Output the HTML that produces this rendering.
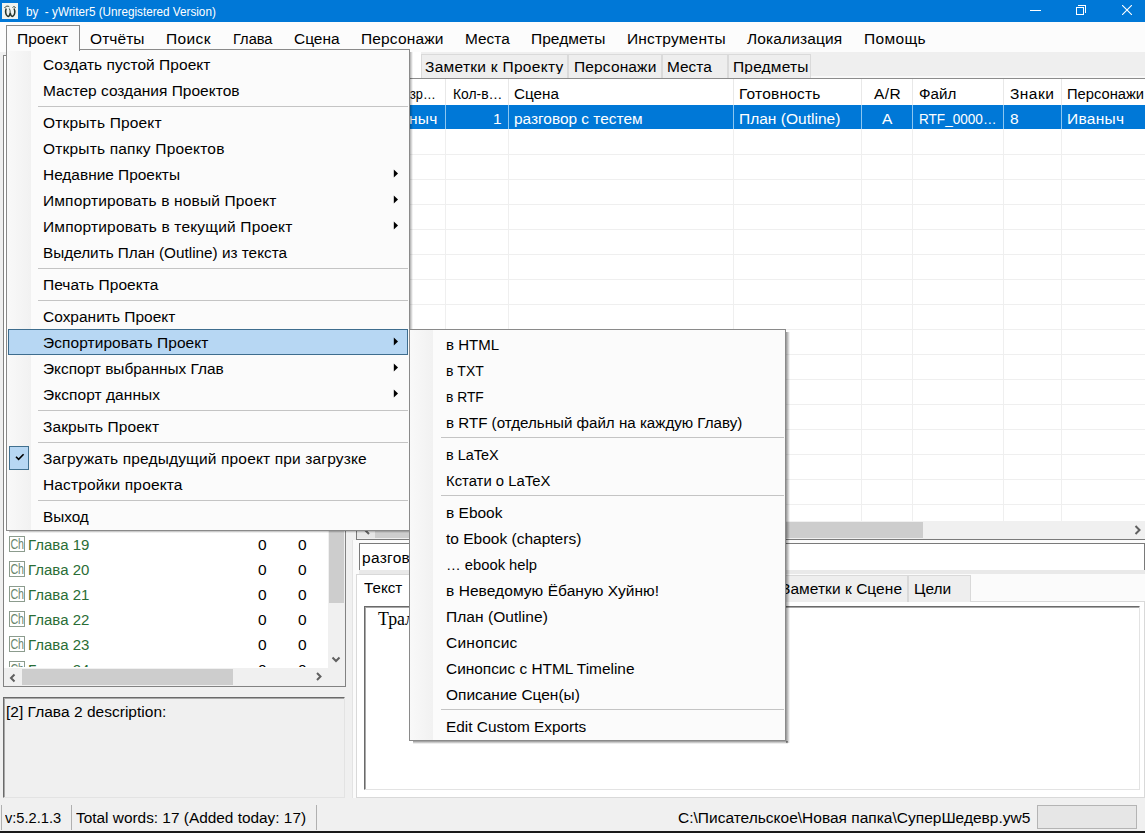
<!DOCTYPE html><html><head><meta charset="utf-8"><style>
*{margin:0;padding:0;box-sizing:border-box}
html,body{width:1145px;height:833px;overflow:hidden;background:#f0f0f0;font-family:"Liberation Sans",sans-serif;font-size:15px;color:#000;position:relative}
.abs{position:absolute}
.t{position:absolute;white-space:nowrap;letter-spacing:0.3px}
</style></head><body>

<div class="abs" style="left:0px;top:0px;width:1145px;height:22px;background:#0078d7"></div>
<div class="abs" style="left:2px;top:3px;width:16px;height:16px;background:#eef3f0"></div>
<svg class="abs" style="left:2px;top:3px" width="16" height="16"><path d="M4.2 5.5C3.2 8 3.5 12 5.5 13.2C7 14 8 12 8.2 9.5C8.5 12 9.5 14 11 13.2C13 12 13.3 8 12 5.5" stroke="#26352b" stroke-width="1.5" fill="none"/><path d="M8.2 9.5C8.2 8 8 6.5 7.3 5.5M2.5 5C3.5 3 6 2.5 7.3 3.8M10.5 4.5C11.5 3.2 13.2 3.5 13.5 5" stroke="#26352b" stroke-width="0.9" fill="none"/></svg>
<div class="t" style="left:26px;top:3.63px;font-size:12.3px;line-height:16px;letter-spacing:0px;transform:scaleX(0.9522);transform-origin:0 0;color:#fff">by&nbsp; - yWriter5 (Unregistered Version)</div>
<div class="abs" style="left:1030px;top:10px;width:11px;height:1px;background:#fff"></div>
<div class="abs" style="left:1076px;top:7px;width:8px;height:8px;border:1px solid #fff"></div>
<div class="abs" style="left:1078px;top:5px;width:8px;height:8px;border-top:1px solid #fff;border-right:1px solid #fff"></div>
<svg class="abs" style="left:1122px;top:5px" width="10" height="10"><path d="M0 0L10 10M10 0L0 10" stroke="#fff" stroke-width="1.1"/></svg>
<div class="abs" style="left:0px;top:22px;width:1145px;height:30px;background:#fcfcfc"></div>
<div class="t" style="left:90px;top:28.68px;font-size:15.5px;line-height:20px;letter-spacing:0.081px;">Отчёты</div>
<div class="t" style="left:166px;top:28.68px;font-size:15.5px;line-height:20px;letter-spacing:0.387px;">Поиск</div>
<div class="t" style="left:233px;top:28.68px;font-size:15.5px;line-height:20px;letter-spacing:0px;transform:scaleX(0.9433);transform-origin:0 0;">Глава</div>
<div class="t" style="left:294px;top:28.68px;font-size:15.5px;line-height:20px;letter-spacing:0px;transform:scaleX(0.9977);transform-origin:0 0;">Сцена</div>
<div class="t" style="left:361px;top:28.68px;font-size:15.5px;line-height:20px;letter-spacing:0.157px;">Персонажи</div>
<div class="t" style="left:465px;top:28.68px;font-size:15.5px;line-height:20px;letter-spacing:0px;transform:scaleX(0.9930);transform-origin:0 0;">Места</div>
<div class="t" style="left:531px;top:28.68px;font-size:15.5px;line-height:20px;letter-spacing:0.029px;">Предметы</div>
<div class="t" style="left:627px;top:28.68px;font-size:15.5px;line-height:20px;letter-spacing:0.194px;">Инструменты</div>
<div class="t" style="left:747px;top:28.68px;font-size:15.5px;line-height:20px;letter-spacing:0.129px;">Локализация</div>
<div class="t" style="left:864px;top:28.68px;font-size:15.5px;line-height:20px;letter-spacing:0.345px;">Помощь</div>
<div class="abs" style="left:345px;top:52px;width:800px;height:27px;background:#efefef"></div>
<div class="abs" style="left:811px;top:76px;width:334px;height:2px;background:#f9f9f9"></div>
<div class="abs" style="left:356px;top:52px;width:65px;height:27px;background:#fff"></div>
<div class="abs" style="left:421px;top:54px;width:147px;height:25px;background:#eeeeee;border:1px solid #dadada;border-bottom:none"></div>
<div class="t" style="left:425px;top:57.38px;font-size:15.5px;line-height:20px;letter-spacing:0.283px;">Заметки к Проекту</div>
<div class="abs" style="left:422px;top:74px;width:145px;height:4px;background:#eeeeee"></div>
<div class="abs" style="left:568px;top:54px;width:94px;height:25px;background:#eeeeee;border:1px solid #dadada;border-bottom:none"></div>
<div class="t" style="left:574px;top:57.38px;font-size:15.5px;line-height:20px;letter-spacing:0.145px;">Персонажи</div>
<div class="abs" style="left:569px;top:74px;width:92px;height:4px;background:#eeeeee"></div>
<div class="abs" style="left:662px;top:54px;width:66px;height:25px;background:#eeeeee;border:1px solid #dadada;border-bottom:none"></div>
<div class="t" style="left:667px;top:57.38px;font-size:15.5px;line-height:20px;letter-spacing:0px;transform:scaleX(0.9952);transform-origin:0 0;">Места</div>
<div class="abs" style="left:663px;top:74px;width:64px;height:4px;background:#eeeeee"></div>
<div class="abs" style="left:728px;top:54px;width:83px;height:25px;background:#eeeeee;border:1px solid #dadada;border-bottom:none"></div>
<div class="t" style="left:733px;top:57.38px;font-size:15.5px;line-height:20px;letter-spacing:0.187px;">Предметы</div>
<div class="abs" style="left:729px;top:74px;width:81px;height:4px;background:#eeeeee"></div>
<div class="abs" style="left:356px;top:78px;width:789px;height:1px;background:#8c8c8c"></div>
<div class="abs" style="left:356px;top:79px;width:789px;height:460px;background:#fff"></div>
<div class="t" style="left:410px;top:83.68px;font-size:15.5px;line-height:20px;letter-spacing:0px;transform:scaleX(0.8228);transform-origin:0 0;">зр…</div>
<div class="t" style="left:453px;top:83.68px;font-size:15.5px;line-height:20px;letter-spacing:0px;transform:scaleX(0.8959);transform-origin:0 0;">Кол-в…</div>
<div class="t" style="left:514px;top:83.68px;font-size:15.5px;line-height:20px;letter-spacing:0px;transform:scaleX(0.9824);transform-origin:0 0;">Сцена</div>
<div class="t" style="left:739px;top:83.68px;font-size:15.5px;line-height:20px;letter-spacing:0.197px;">Готовность</div>
<div class="t" style="left:874px;top:83.68px;font-size:15.5px;line-height:20px;letter-spacing:0.428px;">A/R</div>
<div class="t" style="left:919px;top:83.68px;font-size:15.5px;line-height:20px;letter-spacing:0px;transform:scaleX(0.9788);transform-origin:0 0;">Файл</div>
<div class="t" style="left:1010px;top:83.68px;font-size:15.5px;line-height:20px;letter-spacing:0.454px;">Знаки</div>
<div class="t" style="left:1067px;top:83.68px;font-size:15.5px;line-height:20px;letter-spacing:0px;transform:scaleX(0.9490);transform-origin:0 0;">Персонажи</div>
<div class="abs" style="left:356px;top:105px;width:789px;height:24px;background:#0078d7"></div>
<div class="t" style="left:409px;top:108.98px;font-size:15.5px;line-height:20px;color:#fff">ныч</div>
<div class="t" style="left:493px;top:108.98px;font-size:15.5px;line-height:20px;color:#fff">1</div>
<div class="t" style="left:514px;top:108.98px;font-size:15.5px;line-height:20px;letter-spacing:0px;transform:scaleX(0.9947);transform-origin:0 0;color:#fff">разговор с тестем</div>
<div class="t" style="left:739px;top:108.98px;font-size:15.5px;line-height:20px;letter-spacing:0.022px;color:#fff">План (Outline)</div>
<div class="t" style="left:882px;top:108.98px;font-size:15.5px;line-height:20px;color:#fff">A</div>
<div class="t" style="left:919px;top:108.98px;font-size:15.5px;line-height:20px;letter-spacing:0px;transform:scaleX(0.8762);transform-origin:0 0;color:#fff">RTF_0000…</div>
<div class="t" style="left:1010px;top:108.98px;font-size:15.5px;line-height:20px;color:#fff">8</div>
<div class="t" style="left:1067px;top:108.98px;font-size:15.5px;line-height:20px;letter-spacing:0.278px;color:#fff">Иваныч</div>
<div class="abs" style="left:445px;top:79px;width:1px;height:26px;background:#e8e8e8"></div>
<div class="abs" style="left:445px;top:105px;width:1px;height:24px;background:#8cc6f0"></div>
<div class="abs" style="left:445px;top:129px;width:1px;height:392px;background:#efefef"></div>
<div class="abs" style="left:508px;top:79px;width:1px;height:26px;background:#e8e8e8"></div>
<div class="abs" style="left:508px;top:105px;width:1px;height:24px;background:#8cc6f0"></div>
<div class="abs" style="left:508px;top:129px;width:1px;height:392px;background:#efefef"></div>
<div class="abs" style="left:733px;top:79px;width:1px;height:26px;background:#e8e8e8"></div>
<div class="abs" style="left:733px;top:105px;width:1px;height:24px;background:#8cc6f0"></div>
<div class="abs" style="left:733px;top:129px;width:1px;height:392px;background:#efefef"></div>
<div class="abs" style="left:861px;top:79px;width:1px;height:26px;background:#e8e8e8"></div>
<div class="abs" style="left:861px;top:105px;width:1px;height:24px;background:#8cc6f0"></div>
<div class="abs" style="left:861px;top:129px;width:1px;height:392px;background:#efefef"></div>
<div class="abs" style="left:912px;top:79px;width:1px;height:26px;background:#e8e8e8"></div>
<div class="abs" style="left:912px;top:105px;width:1px;height:24px;background:#8cc6f0"></div>
<div class="abs" style="left:912px;top:129px;width:1px;height:392px;background:#efefef"></div>
<div class="abs" style="left:1003px;top:79px;width:1px;height:26px;background:#e8e8e8"></div>
<div class="abs" style="left:1003px;top:105px;width:1px;height:24px;background:#8cc6f0"></div>
<div class="abs" style="left:1003px;top:129px;width:1px;height:392px;background:#efefef"></div>
<div class="abs" style="left:1061px;top:79px;width:1px;height:26px;background:#e8e8e8"></div>
<div class="abs" style="left:1061px;top:105px;width:1px;height:24px;background:#8cc6f0"></div>
<div class="abs" style="left:1061px;top:129px;width:1px;height:392px;background:#efefef"></div>
<div class="abs" style="left:356px;top:154px;width:789px;height:1px;background:#efefef"></div>
<div class="abs" style="left:356px;top:179px;width:789px;height:1px;background:#efefef"></div>
<div class="abs" style="left:356px;top:204px;width:789px;height:1px;background:#efefef"></div>
<div class="abs" style="left:356px;top:229px;width:789px;height:1px;background:#efefef"></div>
<div class="abs" style="left:356px;top:254px;width:789px;height:1px;background:#efefef"></div>
<div class="abs" style="left:356px;top:279px;width:789px;height:1px;background:#efefef"></div>
<div class="abs" style="left:356px;top:304px;width:789px;height:1px;background:#efefef"></div>
<div class="abs" style="left:356px;top:329px;width:789px;height:1px;background:#efefef"></div>
<div class="abs" style="left:356px;top:354px;width:789px;height:1px;background:#efefef"></div>
<div class="abs" style="left:356px;top:379px;width:789px;height:1px;background:#efefef"></div>
<div class="abs" style="left:356px;top:404px;width:789px;height:1px;background:#efefef"></div>
<div class="abs" style="left:356px;top:429px;width:789px;height:1px;background:#efefef"></div>
<div class="abs" style="left:356px;top:454px;width:789px;height:1px;background:#efefef"></div>
<div class="abs" style="left:356px;top:479px;width:789px;height:1px;background:#efefef"></div>
<div class="abs" style="left:356px;top:504px;width:789px;height:1px;background:#efefef"></div>
<div class="abs" style="left:356px;top:521px;width:789px;height:18px;background:#f0f0f0"></div>
<div class="abs" style="left:375px;top:522px;width:548px;height:16px;background:#cdcdcd"></div>
<div class="abs" style="left:357px;top:522px;width:18px;height:16px;background:#e6e6e6"></div>
<svg class="abs" style="left:362px;top:524px" width="10" height="12"><path d="M7 2L3 6L7 10" stroke="#606060" stroke-width="2" fill="none"/></svg>
<svg class="abs" style="left:1133px;top:524px" width="10" height="12"><path d="M2.5 2L6.5 6L2.5 10" stroke="#606060" stroke-width="2" fill="none"/></svg>
<div class="abs" style="left:356px;top:539px;width:789px;height:1px;background:#7a7a7a"></div>
<div class="abs" style="left:356px;top:79px;width:1px;height:461px;background:#7a7a7a"></div>
<div class="abs" style="left:352px;top:540px;width:793px;height:258px;background:#fbfbfb;border-left:1px solid #e3e3e3"></div>
<div class="abs" style="left:356px;top:601px;width:789px;height:197px;background:#fff;border:1px solid #d9d9d9"></div>
<div class="abs" style="left:359px;top:543px;width:786px;height:27px;background:#fff;border:1px solid #7a7a7a;border-bottom:none"></div>
<div class="abs" style="left:359px;top:570px;width:786px;height:4px;background:#e9e9e9"></div>
<div class="t" style="left:362px;top:548.08px;font-size:15.5px;line-height:20px;">разговор с тестем</div>
<div class="abs" style="left:420px;top:575px;width:350px;height:27px;background:#eeeeee;border:1px solid #d9d9d9;border-bottom:none"></div>
<div class="abs" style="left:770px;top:575px;width:138px;height:27px;background:#eeeeee;border:1px solid #d9d9d9;border-bottom:none"></div>
<div class="abs" style="left:908px;top:575px;width:63px;height:27px;background:#eeeeee;border:1px solid #d9d9d9;border-bottom:none"></div>
<div class="abs" style="left:356px;top:574px;width:64px;height:33px;background:#fff;border:1px solid #d9d9d9;border-bottom:none"></div>
<div class="t" style="left:364px;top:578.08px;font-size:15.5px;line-height:20px;letter-spacing:0px;transform:scaleX(0.9813);transform-origin:0 0;">Текст</div>
<div class="t" style="left:781px;top:579.28px;font-size:15.5px;line-height:20px;letter-spacing:0.045px;">Заметки к Сцене</div>
<div class="t" style="left:914px;top:579.28px;font-size:15.5px;line-height:20px;letter-spacing:0px;transform:scaleX(0.9978);transform-origin:0 0;">Цели</div>
<div class="abs" style="left:364px;top:606px;width:776px;height:184px;background:#fff;border:1px solid #e3e3e3;border-top-color:#6a6a6a;border-left-color:#6a6a6a;box-shadow:inset 1px 1px 0 #a8a8a8"></div>
<div class="t" style="left:378px;top:609.12px;font-size:17.8px;line-height:20px;letter-spacing:0.000px;font-family:'Liberation Serif';color:#000">Трали-вали</div>
<div class="abs" style="left:3px;top:55px;width:343px;height:632px;background:#fff;border:1px solid #828282"></div>
<div class="abs" style="left:4px;top:530px;width:324px;height:137px;overflow:hidden">
<div class="abs" style="left:5px;top:6px;width:16px;height:16px;border:1px solid #8c9c8e;background:#fff"></div>
<div class="t" style="left:4px;top:7px;width:18px;height:14px;font-size:14.5px;line-height:14px;color:#6a866e;letter-spacing:-0.6px;text-align:center;transform:scaleX(0.74)">Ch</div>
<div class="t" style="left:24px;top:5.28px;font-size:15.5px;line-height:20px;letter-spacing:0px;transform:scaleX(0.9665);transform-origin:0 0;color:#2a6d36">Глава 19</div>
<div class="t" style="left:254px;top:5.28px;font-size:15.5px;line-height:20px;letter-spacing:0.000px;">0</div>
<div class="t" style="left:294px;top:5.28px;font-size:15.5px;line-height:20px;letter-spacing:0.000px;">0</div>
<div class="abs" style="left:5px;top:31px;width:16px;height:16px;border:1px solid #8c9c8e;background:#fff"></div>
<div class="t" style="left:4px;top:32px;width:18px;height:14px;font-size:14.5px;line-height:14px;color:#6a866e;letter-spacing:-0.6px;text-align:center;transform:scaleX(0.74)">Ch</div>
<div class="t" style="left:24px;top:30.28px;font-size:15.5px;line-height:20px;letter-spacing:0px;transform:scaleX(0.9665);transform-origin:0 0;color:#2a6d36">Глава 20</div>
<div class="t" style="left:254px;top:30.28px;font-size:15.5px;line-height:20px;letter-spacing:0.000px;">0</div>
<div class="t" style="left:294px;top:30.28px;font-size:15.5px;line-height:20px;letter-spacing:0.000px;">0</div>
<div class="abs" style="left:5px;top:56px;width:16px;height:16px;border:1px solid #8c9c8e;background:#fff"></div>
<div class="t" style="left:4px;top:57px;width:18px;height:14px;font-size:14.5px;line-height:14px;color:#6a866e;letter-spacing:-0.6px;text-align:center;transform:scaleX(0.74)">Ch</div>
<div class="t" style="left:24px;top:55.28px;font-size:15.5px;line-height:20px;letter-spacing:0px;transform:scaleX(0.9665);transform-origin:0 0;color:#2a6d36">Глава 21</div>
<div class="t" style="left:254px;top:55.28px;font-size:15.5px;line-height:20px;letter-spacing:0.000px;">0</div>
<div class="t" style="left:294px;top:55.28px;font-size:15.5px;line-height:20px;letter-spacing:0.000px;">0</div>
<div class="abs" style="left:5px;top:81px;width:16px;height:16px;border:1px solid #8c9c8e;background:#fff"></div>
<div class="t" style="left:4px;top:82px;width:18px;height:14px;font-size:14.5px;line-height:14px;color:#6a866e;letter-spacing:-0.6px;text-align:center;transform:scaleX(0.74)">Ch</div>
<div class="t" style="left:24px;top:80.28px;font-size:15.5px;line-height:20px;letter-spacing:0px;transform:scaleX(0.9665);transform-origin:0 0;color:#2a6d36">Глава 22</div>
<div class="t" style="left:254px;top:80.28px;font-size:15.5px;line-height:20px;letter-spacing:0.000px;">0</div>
<div class="t" style="left:294px;top:80.28px;font-size:15.5px;line-height:20px;letter-spacing:0.000px;">0</div>
<div class="abs" style="left:5px;top:106px;width:16px;height:16px;border:1px solid #8c9c8e;background:#fff"></div>
<div class="t" style="left:4px;top:107px;width:18px;height:14px;font-size:14.5px;line-height:14px;color:#6a866e;letter-spacing:-0.6px;text-align:center;transform:scaleX(0.74)">Ch</div>
<div class="t" style="left:24px;top:105.28px;font-size:15.5px;line-height:20px;letter-spacing:0px;transform:scaleX(0.9665);transform-origin:0 0;color:#2a6d36">Глава 23</div>
<div class="t" style="left:254px;top:105.28px;font-size:15.5px;line-height:20px;letter-spacing:0.000px;">0</div>
<div class="t" style="left:294px;top:105.28px;font-size:15.5px;line-height:20px;letter-spacing:0.000px;">0</div>
<div class="abs" style="left:5px;top:131px;width:16px;height:16px;border:1px solid #8c9c8e;background:#fff"></div>
<div class="t" style="left:4px;top:132px;width:18px;height:14px;font-size:14.5px;line-height:14px;color:#6a866e;letter-spacing:-0.6px;text-align:center;transform:scaleX(0.74)">Ch</div>
<div class="t" style="left:24px;top:130.28px;font-size:15.5px;line-height:20px;letter-spacing:0px;transform:scaleX(0.9665);transform-origin:0 0;color:#2a6d36">Глава 24</div>
<div class="t" style="left:254px;top:130.28px;font-size:15.5px;line-height:20px;letter-spacing:0.000px;">0</div>
<div class="t" style="left:294px;top:130.28px;font-size:15.5px;line-height:20px;letter-spacing:0.000px;">0</div>
</div>
<div class="abs" style="left:4px;top:668px;width:341px;height:18px;background:#f0f0f0"></div>
<div class="abs" style="left:22px;top:669px;width:211px;height:16px;background:#cdcdcd"></div>
<svg class="abs" style="left:8px;top:672px" width="10" height="12"><path d="M6.5 2.5L3 6L6.5 9.5" stroke="#606060" stroke-width="2" fill="none"/></svg>
<svg class="abs" style="left:314px;top:670px" width="10" height="12"><path d="M3 3L6.5 6.5L3 10" stroke="#606060" stroke-width="2" fill="none"/></svg>
<div class="abs" style="left:328px;top:56px;width:17px;height:630px;background:#f0f0f0"></div>
<div class="abs" style="left:329px;top:530px;width:15px;height:73px;background:#cdcdcd"></div>
<svg class="abs" style="left:330px;top:654px" width="12" height="10"><path d="M2.5 3.5L6 7L9.5 3.5" stroke="#606060" stroke-width="2" fill="none"/></svg>
<div class="abs" style="left:3px;top:697px;width:342px;height:101px;background:#f0f0f0;border:1px solid #e3e3e3;border-top-color:#6a6a6a;border-left-color:#6a6a6a;box-shadow:inset 1px 1px 0 #a8a8a8"></div>
<div class="t" style="left:6px;top:702.28px;font-size:15.5px;line-height:20px;letter-spacing:0.021px;">[2] Глава 2 description:</div>
<div class="abs" style="left:0px;top:801px;width:1145px;height:31px;background:#f0f0f0"></div>
<div class="abs" style="left:1px;top:805px;width:1px;height:25px;background:#b0b0b0"></div>
<div class="abs" style="left:71px;top:805px;width:1px;height:25px;background:#b0b0b0"></div>
<div class="abs" style="left:316px;top:805px;width:1px;height:25px;background:#b0b0b0"></div>
<div class="t" style="left:5px;top:808.18px;font-size:15.5px;line-height:20px;letter-spacing:0px;transform:scaleX(0.9434);transform-origin:0 0;">v:5.2.1.3</div>
<div class="t" style="left:76px;top:808.18px;font-size:15.5px;line-height:20px;letter-spacing:0px;transform:scaleX(0.9927);transform-origin:0 0;">Total words: 17 (Added today: 17)</div>
<div class="t" style="left:678px;top:808.18px;font-size:15.5px;line-height:20px;letter-spacing:0.004px;">C:\Писательское\Новая папка\СуперШедевр.yw5</div>
<div class="abs" style="left:1037px;top:805px;width:100px;height:24px;background:#e6e6e6;border:1px solid #b4b4b4"></div>
<div class="abs" style="left:0px;top:831px;width:1145px;height:2px;background:#1a1a1a"></div>
<div class="abs" style="left:409px;top:52px;width:4px;height:481px;background:linear-gradient(to right,rgba(0,0,0,.42),rgba(0,0,0,0))"></div>
<div class="abs" style="left:9px;top:530px;width:402px;height:3px;background:linear-gradient(to bottom,rgba(0,0,0,.42),rgba(0,0,0,0))"></div>
<div class="abs" style="left:6px;top:49px;width:404px;height:482px;background:#fbfbfb;border:1px solid #8a8a8a"></div>
<div class="abs" style="left:7px;top:50px;width:24px;height:480px;background:linear-gradient(to right,#f9f9f9,#f1f1f1)"></div>
<div class="abs" style="left:6px;top:25px;width:74px;height:26px;background:#fbfbfb;border:1px solid #8a8a8a;border-bottom:none"></div>
<div class="abs" style="left:7px;top:49px;width:72px;height:1px;background:#fbfbfb"></div>
<div class="t" style="left:17px;top:28.68px;font-size:15.5px;line-height:20px;letter-spacing:0.007px;">Проект</div>
<div class="t" style="left:43px;top:54.68px;font-size:15.5px;line-height:20px;letter-spacing:0.045px;">Создать пустой Проект</div>
<div class="t" style="left:43px;top:80.68px;font-size:15.5px;line-height:20px;letter-spacing:0.005px;">Мастер создания Проектов</div>
<div class="abs" style="left:38px;top:106px;width:370px;height:1px;background:#c4c4c4"></div>
<div class="t" style="left:43px;top:112.68px;font-size:15.5px;line-height:20px;letter-spacing:0.181px;">Открыть Проект</div>
<div class="t" style="left:43px;top:138.68px;font-size:15.5px;line-height:20px;letter-spacing:0.193px;">Открыть папку Проектов</div>
<div class="t" style="left:43px;top:164.68px;font-size:15.5px;line-height:20px;letter-spacing:0px;transform:scaleX(0.9948);transform-origin:0 0;">Недавние Проекты</div>
<svg class="abs" style="left:392px;top:168px" width="8" height="12"><path d="M1.8 1.6L6 5.5L1.8 9.4Z" fill="#000"/></svg>
<div class="t" style="left:43px;top:190.68px;font-size:15.5px;line-height:20px;letter-spacing:0.162px;">Импортировать в новый Проект</div>
<svg class="abs" style="left:392px;top:194px" width="8" height="12"><path d="M1.8 1.6L6 5.5L1.8 9.4Z" fill="#000"/></svg>
<div class="t" style="left:43px;top:216.68px;font-size:15.5px;line-height:20px;letter-spacing:0.178px;">Импортировать в текущий Проект</div>
<svg class="abs" style="left:392px;top:220px" width="8" height="12"><path d="M1.8 1.6L6 5.5L1.8 9.4Z" fill="#000"/></svg>
<div class="t" style="left:43px;top:242.68px;font-size:15.5px;line-height:20px;letter-spacing:0px;transform:scaleX(0.9875);transform-origin:0 0;">Выделить План (Outline) из текста</div>
<div class="abs" style="left:38px;top:268px;width:370px;height:1px;background:#c4c4c4"></div>
<div class="t" style="left:43px;top:274.68px;font-size:15.5px;line-height:20px;letter-spacing:0.062px;">Печать Проекта</div>
<div class="abs" style="left:38px;top:300px;width:370px;height:1px;background:#c4c4c4"></div>
<div class="t" style="left:43px;top:306.68px;font-size:15.5px;line-height:20px;letter-spacing:0px;transform:scaleX(0.9993);transform-origin:0 0;">Сохранить Проект</div>
<div class="abs" style="left:8px;top:329px;width:400px;height:26px;background:#b7d7f3;border:1px solid #3e6d8e"></div>
<div class="t" style="left:43px;top:332.68px;font-size:15.5px;line-height:20px;letter-spacing:0.070px;">Эспортировать Проект</div>
<svg class="abs" style="left:392px;top:336px" width="8" height="12"><path d="M1.8 1.6L6 5.5L1.8 9.4Z" fill="#000"/></svg>
<div class="t" style="left:43px;top:358.68px;font-size:15.5px;line-height:20px;letter-spacing:0px;transform:scaleX(0.9941);transform-origin:0 0;">Экспорт выбранных Глав</div>
<svg class="abs" style="left:392px;top:362px" width="8" height="12"><path d="M1.8 1.6L6 5.5L1.8 9.4Z" fill="#000"/></svg>
<div class="t" style="left:43px;top:384.68px;font-size:15.5px;line-height:20px;letter-spacing:0.059px;">Экспорт данных</div>
<svg class="abs" style="left:392px;top:388px" width="8" height="12"><path d="M1.8 1.6L6 5.5L1.8 9.4Z" fill="#000"/></svg>
<div class="abs" style="left:38px;top:410px;width:370px;height:1px;background:#c4c4c4"></div>
<div class="t" style="left:43px;top:416.68px;font-size:15.5px;line-height:20px;letter-spacing:0.072px;">Закрыть Проект</div>
<div class="abs" style="left:38px;top:442px;width:370px;height:1px;background:#c4c4c4"></div>
<div class="abs" style="left:9px;top:446px;width:20px;height:24px;background:#b7d7f3;border:1px solid #41708f"></div>
<svg class="abs" style="left:15px;top:453px" width="10" height="8"><path d="M1 3.8L3.6 6.4L8.6 1.2" stroke="#000" stroke-width="1.6" fill="none"/></svg>
<div class="t" style="left:43px;top:448.68px;font-size:15.5px;line-height:20px;letter-spacing:0.155px;">Загружать предыдущий проект при загрузке</div>
<div class="t" style="left:43px;top:474.68px;font-size:15.5px;line-height:20px;letter-spacing:0.151px;">Настройки проекта</div>
<div class="abs" style="left:38px;top:500px;width:370px;height:1px;background:#c4c4c4"></div>
<div class="t" style="left:43px;top:506.68px;font-size:15.5px;line-height:20px;letter-spacing:0px;transform:scaleX(0.9873);transform-origin:0 0;">Выход</div>
<div class="abs" style="left:786px;top:332px;width:4px;height:411px;background:linear-gradient(to right,rgba(0,0,0,.42),rgba(0,0,0,0))"></div>
<div class="abs" style="left:413px;top:741px;width:375px;height:3px;background:linear-gradient(to bottom,rgba(0,0,0,.42),rgba(0,0,0,0))"></div>
<div class="abs" style="left:409px;top:329px;width:377px;height:412px;background:#fbfbfb;border:1px solid #8a8a8a"></div>
<div class="abs" style="left:410px;top:330px;width:23px;height:410px;background:linear-gradient(to right,#f9f9f9,#f1f1f1)"></div>
<div class="t" style="left:446px;top:334.78px;font-size:15.5px;line-height:20px;letter-spacing:0px;transform:scaleX(0.9683);transform-origin:0 0;">в HTML</div>
<div class="t" style="left:446px;top:360.78px;font-size:15.5px;line-height:20px;letter-spacing:0px;transform:scaleX(0.9037);transform-origin:0 0;">в TXT</div>
<div class="t" style="left:446px;top:386.78px;font-size:15.5px;line-height:20px;letter-spacing:0px;transform:scaleX(0.8917);transform-origin:0 0;">в RTF</div>
<div class="t" style="left:446px;top:412.78px;font-size:15.5px;line-height:20px;letter-spacing:0px;transform:scaleX(0.9767);transform-origin:0 0;">в RTF (отдельный файл на каждую Главу)</div>
<div class="abs" style="left:441px;top:437px;width:343px;height:1px;background:#c4c4c4"></div>
<div class="t" style="left:446px;top:444.78px;font-size:15.5px;line-height:20px;letter-spacing:0px;transform:scaleX(0.9310);transform-origin:0 0;">в LaTeX</div>
<div class="t" style="left:446px;top:470.78px;font-size:15.5px;line-height:20px;letter-spacing:0px;transform:scaleX(0.9574);transform-origin:0 0;">Кстати о LaTeX</div>
<div class="abs" style="left:441px;top:495px;width:343px;height:1px;background:#c4c4c4"></div>
<div class="t" style="left:446px;top:502.78px;font-size:15.5px;line-height:20px;letter-spacing:0.000px;">в Ebook</div>
<div class="t" style="left:446px;top:528.78px;font-size:15.5px;line-height:20px;letter-spacing:0.002px;">to Ebook (chapters)</div>
<div class="t" style="left:446px;top:554.78px;font-size:15.5px;line-height:20px;letter-spacing:0px;transform:scaleX(0.9513);transform-origin:0 0;">… ebook help</div>
<div class="t" style="left:446px;top:580.78px;font-size:15.5px;line-height:20px;letter-spacing:0.067px;">в Неведомую Ёбаную Хуйню!</div>
<div class="t" style="left:446px;top:606.78px;font-size:15.5px;line-height:20px;letter-spacing:0.053px;">План (Outline)</div>
<div class="t" style="left:446px;top:632.78px;font-size:15.5px;line-height:20px;letter-spacing:0.244px;">Синопсис</div>
<div class="t" style="left:446px;top:658.78px;font-size:15.5px;line-height:20px;letter-spacing:0px;transform:scaleX(0.9942);transform-origin:0 0;">Синопсис с HTML Timeline</div>
<div class="t" style="left:446px;top:684.78px;font-size:15.5px;line-height:20px;letter-spacing:0px;transform:scaleX(0.9972);transform-origin:0 0;">Описание Сцен(ы)</div>
<div class="abs" style="left:441px;top:709px;width:343px;height:1px;background:#c4c4c4"></div>
<div class="t" style="left:446px;top:716.78px;font-size:15.5px;line-height:20px;letter-spacing:0px;transform:scaleX(0.9923);transform-origin:0 0;">Edit Custom Exports</div>
</body></html>
